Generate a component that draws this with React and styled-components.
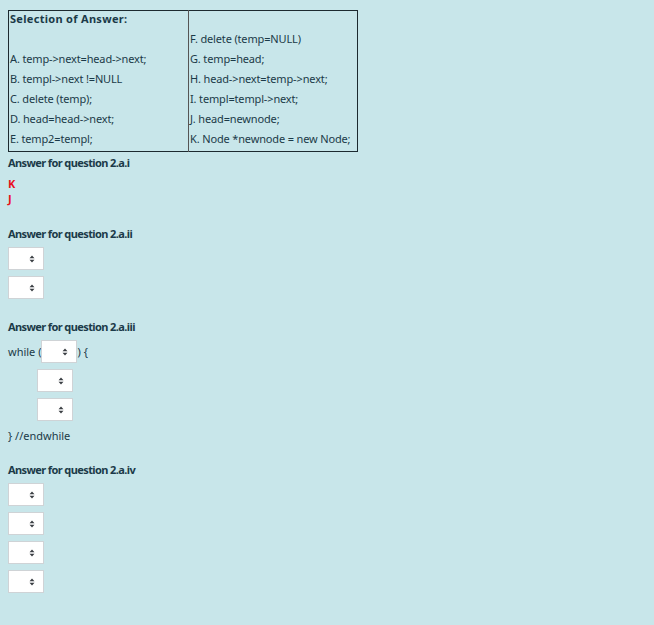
import React from 'react'
import styled, { createGlobalStyle } from 'styled-components'

const GlobalStyle = createGlobalStyle`
  html, body {
    margin: 0;
    background: #c8e6ea;
  }
  body {
    font-family: "Noto Sans", "Open Sans", sans-serif;
    font-size: 11px;
    color: #1b3a48;
  }
`

const Page = styled.div`
  padding: 10px 8px 20px;
`

const AnswerTable = styled.table`
  border-collapse: collapse;
  border: 1px solid #1c2a30;
  width: 350px;
  td {
    height: 16px;
    padding: 0 0 4px 1px;
    vertical-align: middle;
    white-space: nowrap;
    line-height: 16px;
    letter-spacing: -0.15px;
  }
  td:first-child {
    width: 178px;
    border-right: 1px solid #555;
  }
`

const HeadCell = styled.span`
  font-weight: 700;
  letter-spacing: 0.3px;
`

const Question = styled.div`
  font-weight: 700;
  letter-spacing: -0.6px;
  margin-top: ${p => p.$top || 0}px;
  line-height: 20px;
`

const Given = styled.div`
  color: #e8101a;
  font-weight: 700;
  line-height: 15px;
  margin-top: ${p => p.$top || 0}px;
`

const SelectList = styled.div`
  display: flex;
  flex-direction: column;
  gap: 6px;
  margin-top: ${p => p.$top ?? 4}px;
  padding-left: ${p => p.$indent || 0}px;
`

const SelectBox = styled.div`
  width: 36px;
  height: 23px;
  box-sizing: border-box;
  background: #fff;
  border: 1px solid #cfd3d6;
  display: flex;
  align-items: center;
  justify-content: flex-end;
  padding-right: 8px;
  flex-shrink: 0;
`

const CodeLine = styled.div`
  display: flex;
  align-items: center;
  line-height: 20px;
  margin-top: ${p => p.$top || 0}px;
`

const Arrows = () => (
  <svg width="6" height="8" viewBox="0 0 6 8">
    <path d="M3 0.5 L5.5 3.3 H0.5 Z M3 7.5 L5.5 4.7 H0.5 Z" fill="#3b3f44" />
  </svg>
)

const Select = () => (
  <SelectBox>
    <Arrows />
  </SelectBox>
)

const rows = [
  [<HeadCell key="h">Selection of Answer:</HeadCell>, ''],
  ['', 'F. delete (temp=NULL)'],
  ['A. temp->next=head->next;', 'G. temp=head;'],
  ['B. templ->next !=NULL', 'H. head->next=temp->next;'],
  ['C. delete (temp);', 'I. templ=templ->next;'],
  ['D. head=head->next;', 'J. head=newnode;'],
  ['E. temp2=templ;', 'K. Node *newnode = new Node;']
]

const App = () => (
  <Page>
    <GlobalStyle />
    <AnswerTable>
      <tbody>
        {rows.map((r, i) => (
          <tr key={i}>
            <td>{r[0]}</td>
            <td>{r[1]}</td>
          </tr>
        ))}
      </tbody>
    </AnswerTable>

    <Question $top={1}>Answer for question 2.a.i</Question>
    <Given $top={3}>K</Given>
    <Given>J</Given>

    <Question $top={18}>Answer for question 2.a.ii</Question>
    <SelectList $top={3}>
      <Select />
      <Select />
    </SelectList>

    <Question $top={18}>Answer for question 2.a.iii</Question>
    <CodeLine $top={3}>
      while (<Select />) {'{'}
    </CodeLine>
    <SelectList $indent={29} $top={6}>
      <Select />
      <Select />
    </SelectList>
    <CodeLine $top={5}>{'} //endwhile'}</CodeLine>

    <Question $top={14}>Answer for question 2.a.iv</Question>
    <SelectList $top={3}>
      <Select />
      <Select />
      <Select />
      <Select />
    </SelectList>
  </Page>
)

export default App
